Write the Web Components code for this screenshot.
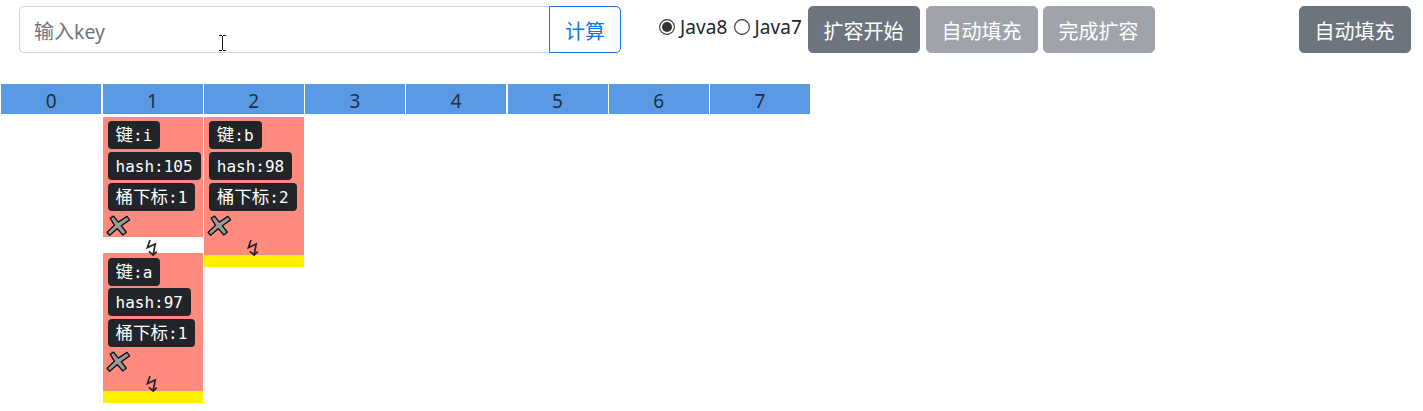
<!DOCTYPE html>
<html lang="zh">
<head>
<meta charset="utf-8">
<title>HashMap</title>
<style>
html,body{margin:0;background:#fff;overflow:hidden}
body{font-family:"Noto Sans","Noto Sans CJK SC",sans-serif;color:#212529}
</style>
</head>
<body>
<hash-map-app></hash-map-app>
<script>
const define = (name, html, setup) => customElements.define(name, class extends HTMLElement {
  connectedCallback() {
    if (this.shadowRoot) return;
    const t = document.createElement('template');
    t.innerHTML = html;
    this.attachShadow({mode: 'open'}).append(t.content.cloneNode(true));
    if (setup) setup(this, this.shadowRoot);
  }
});

define('action-button', `<style>
:host{display:block;box-sizing:border-box;width:112px;height:47px;flex:none}
button{display:block;box-sizing:border-box;width:100%;height:100%;margin:0;padding:0 1px 0 0;border:1px solid #6c757d;border-radius:5px;background:#6c757d;color:#fff;font:400 20px/47px "Noto Sans CJK SC",sans-serif;white-space:nowrap}
:host([muted]) button{background:#a0a4aa;border-color:#a0a4aa}
</style><button><slot></slot></button>`);

define('key-input', `<style>
:host{display:flex;width:602px;height:47px;flex:none}
.field{box-sizing:border-box;width:530px;border:1px solid #ced4da;border-right:0;border-radius:5px 0 0 5px;padding-left:14px;color:#6c757d;font:400 20px/47px "Noto Sans CJK SC",sans-serif;white-space:nowrap}
.field span{font:400 19.5px "Noto Sans",sans-serif}
.go{box-sizing:border-box;width:72px;height:47px;margin:0;padding:0;border:1px solid #1677d8;border-radius:0 5px 5px 0;background:#fff;color:#0b78e8;font:400 20px/47px "Noto Sans CJK SC",sans-serif}
</style><div class="field">输入<span>key</span></div><button class="go">计算</button>`);

define('radio-option', `<style>
:host{display:flex;align-items:center;height:24px;font:400 19px/26px "Noto Sans",sans-serif;letter-spacing:.1px;white-space:nowrap}
svg{display:block;width:16px;height:16px;margin-right:5px;flex:none}
.dot{display:none}:host([checked]) .dot{display:inline}
</style><svg viewBox="0 0 16 16"><circle cx="8" cy="8" r="7.4" fill="#fff" stroke="#333" stroke-width="1.1"/><circle class="dot" cx="8" cy="8" r="5" fill="#333"/></svg><slot></slot>`);

define('bucket-index', `<style>
:host{display:block;width:100px;height:30px;background:#5a9ae4;text-align:center;font:400 19px/34px "Noto Sans",sans-serif;color:#212f40}
</style><slot></slot>`);

define('info-tag', `<style>
:host{display:block;box-sizing:border-box;width:var(--w);height:28px;padding-left:8px;border-radius:4px;background:#212529;color:#fff;font:400 16px/var(--lh,26px) "DejaVu Sans Mono","Noto Sans CJK SC",monospace;white-space:nowrap;overflow:hidden}
::slotted(span){font:400 17.5px/26px "Noto Sans CJK SC",sans-serif}
</style><slot></slot>`);

define('cross-icon', `<style>:host,svg{display:block;width:25px;height:22px}</style>
<svg viewBox="0 0 25 22"><path d="M4.2 3.2 7.6 1.2 12.3 7.1 21 1.4 23.6 4.9 15.3 10.8 20.3 17.2 16.8 20 11.4 13.6 3.6 20.2 1.1 17.2 8.5 10.3Z" fill="#999b9b" stroke="#171515" stroke-width="1.4" stroke-linejoin="round"/></svg>`);

define('zigzag-arrow', `<style>:host,svg{display:block;width:14px;height:18px}</style>
<svg viewBox="0 0 14 18" fill="none" stroke="#262329" stroke-width="1.7"><path d="M5 1 2.4 8.6 10.2 5 8.2 15.3M3.8 12.4 8.2 16 11.8 12.6"/></svg>`);

define('hash-node', `<style>
:host{display:flex;flex-direction:column;box-sizing:border-box;width:100px;height:120px;padding:4px 0 0 5px;background:#ff8b7f;position:relative}
:host([last]){height:138px}
:host([low]){padding-top:5px}
info-tag{margin-bottom:3px;flex:none}
.h{--lh:29px}
:host([low]) info-tag:first-of-type{margin-bottom:2px}
cross-icon{margin:1px 0 0 -2px}
zigzag-arrow{position:absolute;left:42px;top:122px;z-index:1}
</style><info-tag class="k"><span>键</span>:<b style="font-weight:400"></b></info-tag><info-tag class="h"></info-tag><info-tag class="i"></info-tag><cross-icon></cross-icon><zigzag-arrow></zigzag-arrow>`, (host, r) => {
  const a = n => host.getAttribute(n);
  r.querySelector('b').textContent = a('key');
  const h = r.querySelector('.h'), i = r.querySelector('.i'), k = r.querySelector('.k');
  h.textContent = 'hash:' + a('hash');
  i.innerHTML = '<span>桶下标</span>:' + a('index');
  k.style.setProperty('--w', a('index') === '2' ? '53px' : '52px');
  h.style.setProperty('--w', a('hash').length === 3 ? '93px' : '83px');
  i.style.setProperty('--w', a('index') === '2' ? '88px' : '87px');
});

define('bucket-chain', `<style>
:host{display:flex;flex-direction:column;gap:16px;width:100px;position:relative}
:host::after{content:"";height:12px;margin-top:-16px;background:#fff000}
:host([empty])::after{display:none}
</style><slot></slot>`);

define('hash-map-app', `<style>
:host{display:block;width:1423px;height:411px;overflow:hidden}
.bar{display:flex;box-sizing:border-box;padding:6px 12px 0 19px;height:84px}
.radios{display:flex;gap:6px;margin:9px 5px 0 38px;width:144px}
.actions{display:flex;gap:6px}
.actions action-button:nth-child(3){margin-left:-1px}
.end{margin-left:auto}
.grid{display:grid;grid-template-columns:repeat(8,100px);column-gap:1.25px;row-gap:3px;padding-left:1.25px;align-items:start}
</style>
<div class="bar">
<key-input></key-input>
<div class="radios"><radio-option checked>Java8</radio-option><radio-option>Java7</radio-option></div>
<div class="actions"><action-button>扩容开始</action-button><action-button muted>自动填充</action-button><action-button muted>完成扩容</action-button></div>
<action-button class="end">自动填充</action-button>
</div>
<div class="grid">
<bucket-index>0</bucket-index><bucket-index>1</bucket-index><bucket-index>2</bucket-index><bucket-index>3</bucket-index><bucket-index>4</bucket-index><bucket-index>5</bucket-index><bucket-index>6</bucket-index><bucket-index>7</bucket-index>
<bucket-chain empty></bucket-chain>
<bucket-chain><hash-node key="i" hash="105" index="1"></hash-node><hash-node low last key="a" hash="97" index="1"></hash-node></bucket-chain>
<bucket-chain><hash-node last key="b" hash="98" index="2"></hash-node></bucket-chain>
</div>
<mouse-caret></mouse-caret>`);

define('mouse-caret', `<style>:host{display:block;position:absolute;left:219px;top:35px;width:7px;height:16px}svg{display:block}</style>
<svg width="7" height="16" shape-rendering="crispEdges" fill="#111"><path d="M0 0H3V1H0ZM4 0H7V1H4ZM3 1H4V15H3ZM0 15H3V16H0ZM4 15H7V16H4Z"/></svg>`);
</script>
</body>
</html>
